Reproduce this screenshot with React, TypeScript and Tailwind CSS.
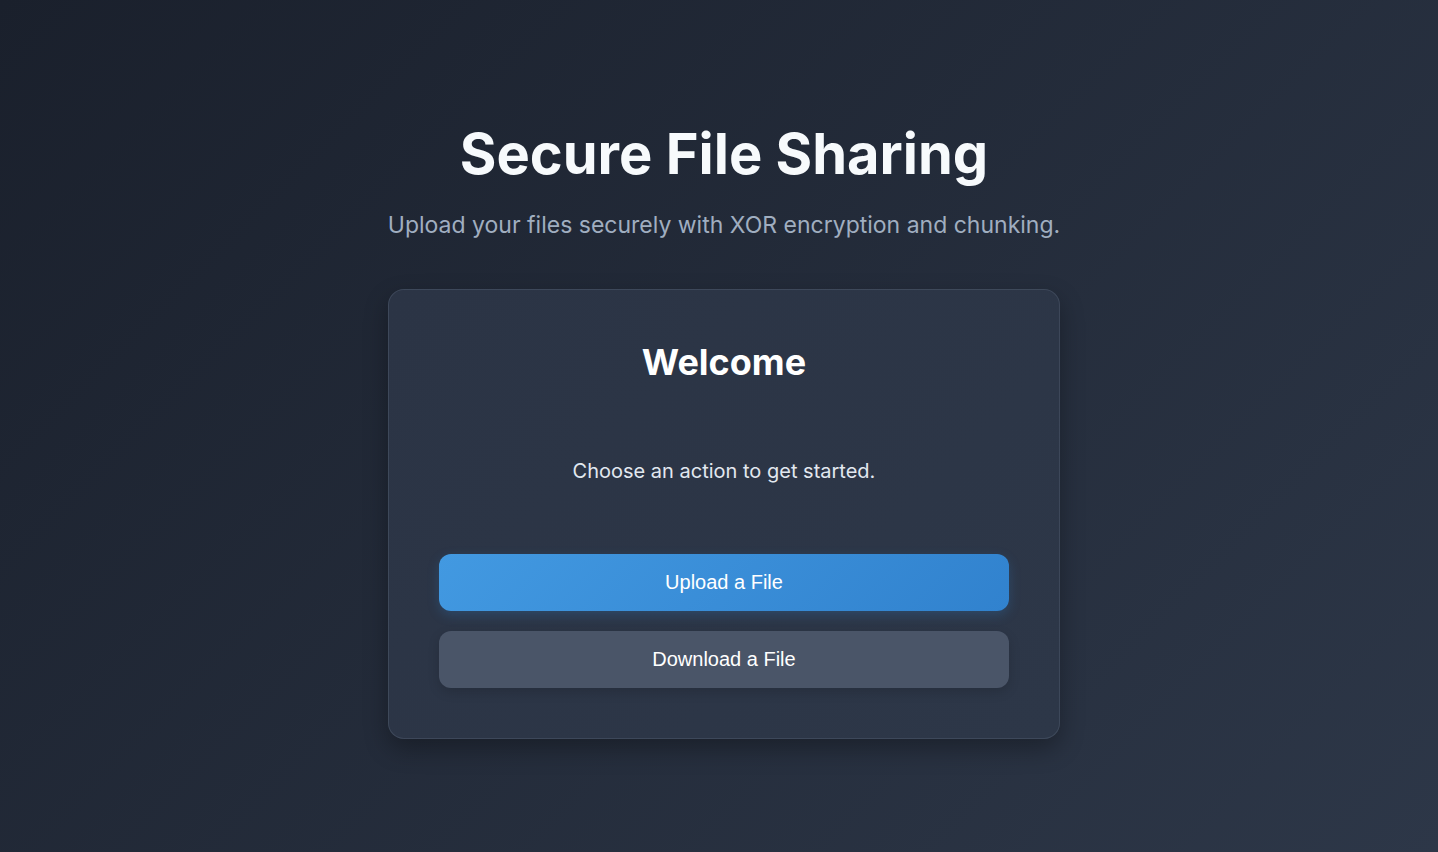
export default function App() {
  return (
    <div className="min-h-screen w-full bg-[linear-gradient(135deg,#1a202c_0%,#2d3748_100%)] flex flex-col items-center pl-[10px] font-['Inter',sans-serif] text-[#f7fafc]">
      <h1 className="mt-[121px] text-[56px] leading-[1.2] font-bold">Secure File Sharing</h1>
      <p className="mt-[20px] text-[23px] leading-[1.5] text-[#a0aec0]">Upload your files securely with XOR encryption and chunking.</p>
      <div className="mt-[46px] w-[672px] rounded-[16px] border border-[#4a5568]/60 bg-[linear-gradient(135deg,#2b3445_0%,#2d3748_100%)] px-[50px] pt-[51px] pb-[50px] shadow-[0_10px_25px_rgba(0,0,0,0.3)] flex flex-col items-center">
        <h2 className="text-[36px] leading-[1.2] font-bold text-white">Welcome</h2>
        <p className="mt-[72px] text-[20px] leading-[1.5] text-[#e2e8f0]">Choose an action to get started.</p>
        <div className="mt-[68px] w-full flex flex-col gap-[20px] font-['Liberation_Sans',Arial,sans-serif]">
          <button className="h-[57px] w-full rounded-[12px] bg-[linear-gradient(135deg,#4299e1_0%,#3182ce_100%)] text-[20px] text-white shadow-[0_4px_12px_rgba(49,130,206,0.25)]">Upload a File</button>
          <button className="h-[57px] w-full rounded-[12px] bg-[#4a5568] text-[20px] text-white shadow-[0_4px_12px_rgba(0,0,0,0.15)]">Download a File</button>
        </div>
      </div>
    </div>
  );
}
